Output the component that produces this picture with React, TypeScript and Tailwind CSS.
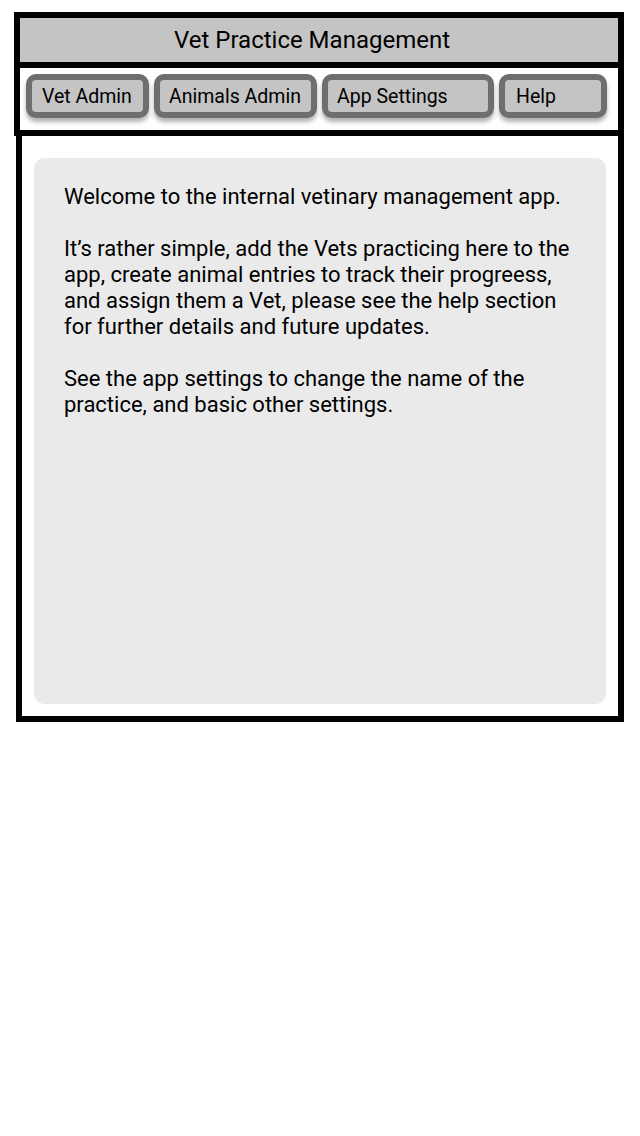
const tabs = [
  { label: 'Vet Admin', w: 'w-[123px]', pl: 'pl-[10px]' },
  { label: 'Animals Admin', w: 'w-[163px]', pl: 'pl-[9px]' },
  { label: 'App Settings', w: 'w-[172px]', pl: 'pl-[9px]' },
  { label: 'Help', w: 'w-[108px]', pl: 'pl-[11px]' },
];

export default function App() {
  return (
    <div className="min-h-[1136px] bg-white pt-[12px] text-black font-['Roboto',sans-serif]">
      <div className="ml-[14px] w-[610px] border-[6px] border-black">
        <header className="h-[44px] bg-[#c4c4c4] flex items-center justify-center pr-[14px] text-[24px]">
          Vet Practice Management
        </header>
        <nav className="h-[68px] border-t-[6px] border-black bg-white flex items-start gap-[5px] pl-[6px] pt-[6px]">
          {tabs.map((t) => (
            <div
              key={t.label}
              className={`${t.w} ${t.pl} h-[44px] flex items-center justify-start pt-[1px] rounded-[10px] border-[6px] border-[#6e6e6e] bg-[#c4c4c4] text-[19.5px] leading-none shadow-[0_4px_4px_rgba(0,0,0,0.3)]`}
            >
              {t.label}
            </div>
          ))}
        </nav>
      </div>
      <main className="ml-[16px] w-[608px] h-[586px] border-[6px] border-t-0 border-black px-[12px] pt-[22px] pb-[12px]">
        <div className="h-full rounded-[10px] bg-[#eaeaea] pl-[30px] pr-[30px] pt-[26px] text-[22px] leading-[26px]">
          <p>Welcome to the internal vetinary management app.</p>
          <p className="mt-[26px]">
            It’s rather simple, add the Vets practicing here to the app, create animal entries to track their
            progreess, and assign them a Vet, please see the help section for further details and future updates.
          </p>
          <p className="mt-[26px]">
            See the app settings to change the name of the practice, and basic other settings.
          </p>
        </div>
      </main>
    </div>
  );
}
